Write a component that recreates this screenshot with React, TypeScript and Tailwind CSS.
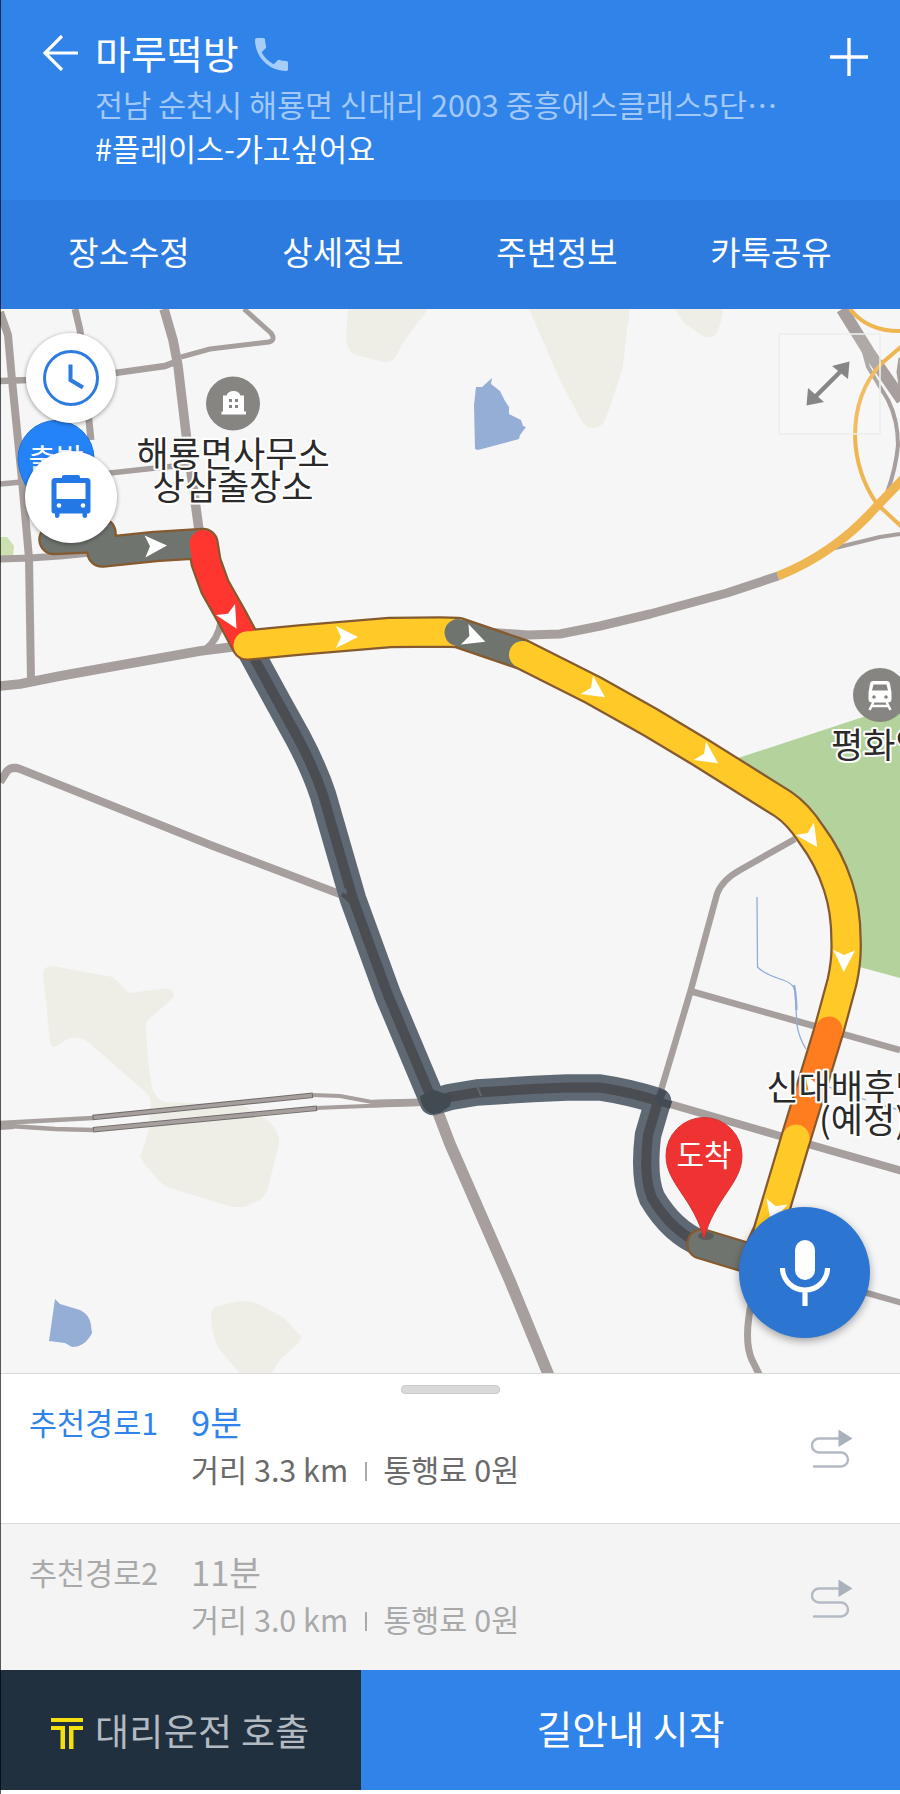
import type { ReactNode } from 'react';

/* ─── Header tabs ────────────────────────────── */
const tabs = ['장소수정', '상세정보', '주변정보', '카톡공유'];

/* ─── Suggested routes ───────────────────────── */
const routes = [
  { name: '추천경로1', time: '9분', distance: '거리 3.3 km', toll: '통행료 0원', active: true },
  { name: '추천경로2', time: '11분', distance: '거리 3.0 km', toll: '통행료 0원', active: false },
];

/* ─── Map geometry ───────────────────────────── */
const roads = [
  { d: 'M0 312 L8 335 L12 380 L22 480 L29 558 L31 680', w: 8 },
  { d: 'M75 309 L80 330 L84 372 L91 440', w: 7 },
  { d: 'M164 309 L173 340 L178 366 L188 450 L199 530', w: 9.5 },
  { d: 'M244 309 L271 333 Q276 340 269 342 L210 349 L181 357', w: 5 },
  { d: 'M0 381 L28 380 L115 373 L165 366 L178 361', w: 6.5 },
  { d: 'M0 484 L22 482 L110 473 L165 467 L188 465', w: 5.5 },
  { d: 'M0 559 L30 558 L60 556 L100 552', w: 7 },
  { d: 'M0 686 L20 684 L60 676 L110 667 L200 651 L240 646', w: 9.5 },
  { d: 'M205 650 Q218 640 221 622', w: 7 },
  { d: 'M0 782 L7 771 Q12 766 20 769 L213 846 L345 896', w: 8 },
  { d: 'M0 1126 L14 1125', w: 8 },
  { d: 'M0 1123 L93 1118', w: 4.5 },
  { d: 'M10 1126 L55 1129 L93 1130', w: 4.5 },
  { d: 'M313 1095 L340 1096 L372 1102 L420 1101', w: 4 },
  { d: 'M317 1108 L340 1107 L420 1104', w: 4 },
  { d: 'M372 1103.5 L432 1102', w: 7.5 },
  { d: 'M434 1102 L450 1144 L510 1281 L549 1376', w: 11.5 },
  { d: 'M485 632 L528 635 L560 634 L600 626 L650 614 L727 593 L778 576', w: 9 },
  { d: 'M835 548 L880 537 L900 534', w: 4 },
  { d: 'M842 309 L870 354 L902 400', w: 12 },
  { d: 'M862 345 L868 367 L888 400 Q898 420 898 445 Q896 468 887 493', w: 4 },
  { d: 'M901 358 L899 372 L901 386', w: 5 },
  { d: 'M795 839 L740 870 Q722 880 717 894 L690 993 L659 1097', w: 6.5 },
  { d: 'M690 991 L800 1022 L900 1050', w: 6.5 },
  { d: 'M656 1100 L780 1136 L902 1171', w: 8 },
  { d: 'M860 1291 L902 1303', w: 6 },
  { d: 'M752 1300 Q743 1340 752 1360 L760 1376', w: 7 },
];

const highways = [
  { d: 'M778 576 Q836 553 878 505 L904 478', w: 9 },
  { d: 'M902 346 L881 364 Q855 392 855 436 Q856 474 877 504 L903 528', w: 4 },
  { d: 'M850 309 Q868 332 902 331', w: 4 },
];

const fields = [
  'M348 309 L346 338 Q347 352 356 355 L383 362 Q392 363 396 356 L403 343 L428 309Z',
  'M529 309 L560 380 L581 420 Q586 428 592 428 Q601 428 605 420 L610 407 L623 367 L627 330 L630 309Z',
  'M675 309 Q681 321 687 325 L703 336 Q713 340 717 332 Q722 322 723 309Z',
  'M43 973 Q44 966 52 966 L113 977 L129 993 L168 988 Q177 992 172 999 L148 1020 Q145 1022 146 1030 L148 1060 L152 1087 Q156 1101 166 1102 L243 1105 L267 1120 Q280 1130 279 1144 L268 1188 Q265 1197 260 1200 L245 1207 L232 1207 L167 1187 Q158 1183 140 1157 L148 1133 L151 1102 Q150 1096 143 1090 L88 1042 Q78 1035 68 1039 L54 1047 Q51 1046 50 1042Z',
  'M211 1317 Q210 1310 216 1307 Q245 1297 258 1304 L283 1317 L300 1335 Q303 1338 298 1343 L280 1360 L270 1376 L242 1376 L220 1350 Q212 1338 211 1317Z',
];

const ponds = [
  'M476 387 L482 387 L492 378 L491 384 L500 391 L505 401 L509 407 L509 414 L521 420 L523 426 L526 427 L520 435 L519 439 L478 450 L475 449 L474 405Z',
  'M55 1299 L60 1304 L80 1310 Q90 1315 91 1325 L92 1333 Q85 1347 72 1347 L65 1343 L49 1341Z',
];

const mainRoute =
  'M54 539.5 L85 538 L101 533 L102 552 L155 546.5 L203 543.5 L206 562 L215 587 L232 617 L247 645 L300 640 L390 632.5 L440 632 L458 632.5 L522.5 654.5 L593 690 L650 722 L700 752 L783 804 Q798 814 811 834 Q829 858 838 886 Q846 910 846 940 Q847 960 842 982 L829 1030 L796 1138 L768 1232 L755 1260 L702 1244';

const segments = [
  { d: 'M54 539.5 L85 538 L101 533 L102 552 L155 546.5 L203 543.5', color: '#70746f' },
  { d: 'M765 1263 L702 1244', color: '#70746f' },
  { d: 'M203 543.5 L206 562 L215 587 L232 617 L247 645', color: '#ff362f' },
  { d: 'M247 645 L300 640 L390 632.5 L440 632 L458 632.5', color: '#ffca28' },
  { d: 'M458 632.5 L522.5 654.5', color: '#70746f' },
  {
    d: 'M522.5 654.5 L593 690 L650 722 L700 752 L783 804 Q798 814 811 834 Q829 858 838 886 Q846 910 846 940 Q847 960 842 982 L829 1030',
    color: '#ffca28',
  },
  { d: 'M829 1030 L796 1138', color: '#ff7d1e' },
  { d: 'M796 1138 L768 1232', color: '#ffca28' },
];

const altRoute =
  'M247 645 L277 700 L298 738 Q314 768 323 795 L340 854 L353 899 L388 995 L433 1102 L450 1097 L477 1092.5 L533 1089 L567 1087.5 L600 1087.5 Q630 1092 658 1101 L648 1135 Q643 1177 652 1198 Q672 1232 702 1244';

/* Direction arrows along the main route */
const arrows = [
  [156, 546, -2],
  [231, 619, 60],
  [347, 637, 0],
  [475, 638, 20],
  [596, 691, 34],
  [709, 757, 34],
  [811, 838, 56],
  [844, 961, 91],
  [813, 1088, 106],
  [774, 1212, 106],
];

function MapLabel({ x, y, anchor = 'middle', children }: { x: number; y: number; anchor?: 'start' | 'middle'; children: ReactNode }) {
  return (
    <text
      x={x}
      y={y}
      textAnchor={anchor}
      className="fill-[#2a2a2a] stroke-white stroke-[4px] text-[35px] [paint-order:stroke] [stroke-linejoin:round]"
    >
      {children}
    </text>
  );
}

function RouteMap() {
  return (
    <svg viewBox="0 309 900 1064" className="block h-full w-full" fill="none">
      <rect x="0" y="309" width="900" height="1064" fill="#f6f6f6" />

      {/* Land cover */}
      {fields.map((d) => (
        <path key={d} d={d} fill="#efeee6" />
      ))}
      {ponds.map((d) => (
        <path key={d} d={d} fill="#95aed6" />
      ))}
      <path d="M735 759 L863 717 L900 706 V978 L845 963 L846 910 L811 834 L783 804Z" fill="#b4d29c" />
      <path d="M0 537 H7 L14 546 L13 558 H0Z" fill="#cde0b0" />

      {/* Streets */}
      <g stroke="#a69f9d" strokeLinejoin="round">
        {roads.map((r) => (
          <path key={r.d} d={r.d} strokeWidth={r.w} />
        ))}
      </g>
      <g stroke="#6f6a68" strokeWidth="5.5">
        <path d="M92.5 1117.6 L313 1095.3" />
        <path d="M93 1129.7 L317 1108.3" />
      </g>
      <g stroke="#a69f9d" strokeWidth="3.6">
        <path d="M93.5 1117.5 L312 1095.4" />
        <path d="M94 1129.6 L316 1108.4" />
      </g>
      <g stroke="#efb550">
        {highways.map((r) => (
          <path key={r.d} d={r.d} strokeWidth={r.w} />
        ))}
      </g>
      <path d="M757 897 L757.5 967 Q764 974 783 980 Q793 983 795 991 L797 1025 Q799 1038 806 1049" stroke="#8fadd8" strokeWidth="1.3" />
      <path d="M794 985 Q796 992 796.5 1010" stroke="#8fadd8" strokeWidth="2.2" />
      <path d="M826 1086 L850 1095 L866 1100 M876 1104 L900 1110" stroke="#8fadd8" strokeWidth="1.3" />

      {/* Alternative route */}
      <path d={altRoute} stroke="#5f6974" strokeWidth="26.5" strokeLinejoin="round" />
      <path d={altRoute} stroke="#4a4d51" strokeWidth="10" strokeLinejoin="round" />
      <path d="M341 896 L353 906 L358 920 L350 880Z" fill="#4a4d51" />
      <path d="M420 1096 Q422 1111 432 1114 L440 1113 L450 1106 L452 1096 L434 1090Z" fill="#424a52" />
      <path d="M658 1101 L663 1090 M658 1101 L671 1105" stroke="#434b54" strokeWidth="8" />
      <path d="M341 891 L346 888 L347 895Z" fill="#5f6974" />
      <path d="M477 1086 L481 1096" stroke="#5f6974" strokeWidth="2" />

      {/* Main route */}
      <path d={mainRoute} stroke="#855a2e" strokeWidth="31.5" strokeLinejoin="round" strokeLinecap="round" />
      {segments.map((s) => (
        <path key={s.d} d={s.d} stroke={s.color} strokeWidth="27" strokeLinejoin="round" strokeLinecap="round" />
      ))}
      {arrows.map(([x, y, a]) => (
        <path key={y} d="M-11 -11 L11 0 L-11 11 L-6 0Z" fill="#fff" transform={`translate(${x} ${y}) rotate(${a})`} />
      ))}

      {/* Start and finish pins */}
      <path d="M56 420.5 a38 38 0 0 1 38 38 c0 24 -24 50 -38 80 c-14 -30 -38 -56 -38 -80 a38 38 0 0 1 38 -38Z" fill="#2583fa" stroke="#1f6fd6" />
      <text x="56" y="470" textAnchor="middle" className="fill-white text-[30px]">출발</text>
      <ellipse cx="706" cy="1236" rx="8" ry="4" fill="#000" opacity="0.2" />
      <path d="M704 1117.5 a38 38 0 0 1 38 38 c0 28 -27 42 -38 83 c-11 -41 -38 -55 -38 -83 a38 38 0 0 1 38 -38Z" fill="#ef3333" stroke="#cf3434" />
      <text x="704" y="1166" textAnchor="middle" className="fill-white text-[30px]">도착</text>

      {/* Places */}
      <circle cx="233" cy="403.5" r="27" fill="#868582" />
      <path d="M223 395.500 H226.500 Q228 391 233.500 391 Q239 391 240.500 395.500 H244 V411.500 H246 V414.500 H221.500 V411.500 H223Z" fill="#fff" />
      <path d="M229 399 h3 v3 h-3Z M235 399 h3 v3 h-3Z M229 405 h3 v3 h-3Z M235 405 h3 v3 h-3Z" fill="#868582" />
      <MapLabel x={233} y={466.5}>해룡면사무소</MapLabel>
      <MapLabel x={233} y={499.5}>상삼출장소</MapLabel>

      <circle cx="880" cy="695" r="27" fill="#868582" />
      <path d="M873 681 H887 Q889.500 681 890 684 L891.500 692 V699 Q891.500 702.500 888 702.500 H872 Q868.500 702.500 868.500 699 V692 L870 684 Q870.500 681 873 681Z" fill="#fff" />
      <path d="M873.500 684.500 H886.500 L888 690.500 H872Z" fill="#868582" />
      <circle cx="874" cy="697" r="1.8" fill="#868582" />
      <circle cx="886" cy="697" r="1.8" fill="#868582" />
      <path d="M873.500 702 L869.500 710 M886.500 702 L890.500 710 M872 706 H888" stroke="#fff" strokeWidth="2.4" />
      <MapLabel x={831} y={758} anchor="start">평화역</MapLabel>
      <MapLabel x={863} y={1099.5}>신대배후단지</MapLabel>
      <MapLabel x={863} y={1132.5}>(예정)</MapLabel>
    </svg>
  );
}

function ClockIcon() {
  return (
    <svg viewBox="0 0 58 58" className="h-[58px] w-[58px]" fill="none" stroke="#2d7bdf">
      <circle cx="29" cy="29" r="26.500" strokeWidth="3" />
      <path d="M28.500 15.500 V31 L41 38.500" strokeWidth="4" />
    </svg>
  );
}

function BusIcon() {
  return (
    <svg viewBox="0 0 40 44" className="h-11 w-10" fill="#2478e6">
      <path d="M11 3 V2 Q11 0 13 0 H27 Q29 0 29 2 V3 H36 Q39.500 3 39.500 6.500 V36 Q39.500 38 37.500 38.500 H36 V41 Q36 43 34 43 Q32 43 31.500 41 V38.500 H8.500 V41 Q8 43 6 43 Q4 43 4 41 V38.500 H2.500 Q0.500 38 0.500 36 V6.500 Q0.500 3 4 3Z" />
      <path d="M5.500 8 H34.500 V24 H5.500Z" fill="#fff" />
      <circle cx="8" cy="30.500" r="2.300" fill="#fff" />
      <circle cx="32" cy="30.500" r="2.300" fill="#fff" />
    </svg>
  );
}

function RouteIcon() {
  return (
    <svg viewBox="0 0 42 40" className="h-10 w-[42px]" fill="none">
      <path d="M28 9.500 H8 a7 7 0 0 0 0 14 H30 a7 7 0 0 1 0 14 H3" stroke="#b3bac3" strokeWidth="2.400" strokeLinecap="round" />
      <path d="M27.500 0.500 L41.500 9.500 L27.500 18Z" fill="#a9b1bc" />
    </svg>
  );
}

function Header() {
  return (
    <header className="h-[200px] bg-[#3083e9] pr-8 pl-[42px] pt-[25px]">
      <div className="flex h-[54px] items-center">
        <svg viewBox="0 0 36 36" className="mt-0.5 h-9 w-9" fill="none" stroke="#fff" strokeWidth="3.200">
          <path d="M36 18 H3 M20 1 L3 18 L20 35" />
        </svg>
        <h1 className="ml-[17px] text-[39px] leading-[54px] text-white">마루떡방</h1>
        <svg viewBox="3 3 18 18" className="mt-1 ml-4 h-[33px] w-[33px]" fill="#a6ccf8">
          <path d="M6.620 10.790c1.440 2.830 3.760 5.140 6.590 6.590l2.200-2.200c.27-.27.67-.36 1.020-.24 1.120.37 2.330.57 3.570.57.55 0 1 .45 1 1V20c0 .55-.45 1-1 1-9.390 0-17-7.610-17-17 0-.55.45-1 1-1h3.500c.55 0 1 .45 1 1 0 1.250.2 2.450.57 3.570.11.35.03.74-.25 1.020l-2.200 2.200z" />
        </svg>
        <svg viewBox="0 0 38 38" className="mt-2.5 ml-auto h-[38px] w-[38px]" fill="none" stroke="#fff" strokeWidth="3.400">
          <path d="M19 0 V38 M0 19 H38" />
        </svg>
      </div>
      <p className="mt-1 ml-[53px] text-[30.5px] leading-[42px] whitespace-nowrap text-[#a1c8f7]">
        전남 순천시 해룡면 신대리 2003 중흥에스클래스5단⋯
      </p>
      <p className="ml-[53px] text-[30.5px] leading-[46px] text-white">#플레이스-가고싶어요</p>
    </header>
  );
}

export default function App() {
  return (
    <div className="relative flex h-[1794px] w-[900px] flex-col overflow-hidden bg-white font-['Noto_Sans_CJK_KR','Noto_Sans_CJK_SC',sans-serif]">
      <Header />

      <nav className="grid h-[109px] grid-cols-4 items-center bg-[#2d7bde] px-[22px]">
        {tabs.map((tab) => (
          <button key={tab} className="pb-[7px] text-center text-[33px] leading-[48px] text-white">
            {tab}
          </button>
        ))}
      </nav>

      <main className="relative h-[1064px]">
        <RouteMap />
        {/* Floating map controls */}
        <div className="absolute top-[24px] left-[26px] flex h-[90px] w-[90px] items-center justify-center rounded-full bg-white shadow-[0_1px_4px_rgba(0,0,0,0.4)]">
          <ClockIcon />
        </div>
        <div className="absolute top-[142px] left-[25px] flex h-[92px] w-[92px] items-center justify-center rounded-full bg-white shadow-[0_1px_4px_rgba(0,0,0,0.4)]">
          <BusIcon />
        </div>
        <div className="absolute top-[24px] left-[778px] flex h-[102px] w-[103px] items-center justify-center border-2 border-[#ececec]/80 bg-white/10 pr-[3px] pb-0.5">
          <svg viewBox="0 0 44 45" className="h-[45px] w-11" fill="#868686">
            <path d="M8 37 L36 9" stroke="#868686" strokeWidth="4.5" />
            <path d="M43.500 0.500 L42 18 L26 5Z" />
            <path d="M0.500 44.500 L2 27 L18 41Z" />
          </svg>
        </div>
        <div className="absolute top-[898px] left-[739px] flex h-[131px] w-[131px] items-center justify-center rounded-full bg-[#2c75d1] shadow-[0_3px_8px_rgba(0,0,0,0.35)]">
          <svg viewBox="0 0 50 66" className="h-[66px] w-[50px]" fill="none">
            <rect x="15" y="0" width="20" height="40" rx="10" fill="#fff" />
            <path d="M2.500 28 A22.500 22 0 0 0 47.500 28 M25 50 V66" stroke="#fff" strokeWidth="5.200" />
          </svg>
        </div>
      </main>

      {/* Route list */}
      <section className="relative h-[297px] border-t border-[#d9d9d9]">
        <div className="absolute top-[11px] left-[401px] h-[9px] w-[99px] rounded-[4px] border border-[#c9c9c9] bg-[#d9d9d9]" />
        {routes.map((r) => (
          <div
            key={r.name}
            className={`flex pl-[29px] ${r.active ? 'h-[149px] bg-white text-[#2f83ea]' : 'h-[147px] border-t border-[#dcdcdc] bg-[#f4f4f4] text-[#a9a9a9]'}`}
          >
            <div className="w-[162px] pt-[26px] text-[30.5px] leading-[44px]">{r.name}</div>
            <div className="pt-[23px]">
              <div className="text-[34.5px] leading-[48px]">{r.time}</div>
              <div className={`flex items-center text-[30.5px] leading-[48px] ${r.active ? 'text-[#6a6a6a]' : 'text-[#a9a9a9]'}`}>
                <span>{r.distance}</span>
                <span className="mt-1 mr-[16px] ml-[17px] h-[19px] w-0.5 bg-[#a9a9a9]" />
                <span>{r.toll}</span>
              </div>
            </div>
            <div className="mt-[55px] mr-[47px] ml-auto">
              <RouteIcon />
            </div>
          </div>
        ))}
      </section>

      <footer className="flex h-[120px]">
        <button className="flex w-[361px] items-center bg-[#21303f] pl-[51px] text-[37px] leading-[54px] text-[#b3bac2]">
          <svg viewBox="0 0 32 31" className="mt-1.5 h-[31px] w-8" fill="#f5df0f">
            <path d="M0 0 H32 V4 H0Z M0 8 H14 V31 H9.500 V12 H0Z M18 8 H32 V12 H22.500 V31 H18Z" />
          </svg>
          <span className="ml-3 tracking-[0.3px]">대리운전 호출</span>
        </button>
        <button className="flex-1 bg-[#3083e9] pb-1.5 text-center text-[39px] leading-[54px] text-white">길안내 시작</button>
      </footer>

      {/* Dark hairline on the left edge */}
      <div className="pointer-events-none absolute inset-y-0 left-0 w-px bg-black/65" />
    </div>
  );
}
